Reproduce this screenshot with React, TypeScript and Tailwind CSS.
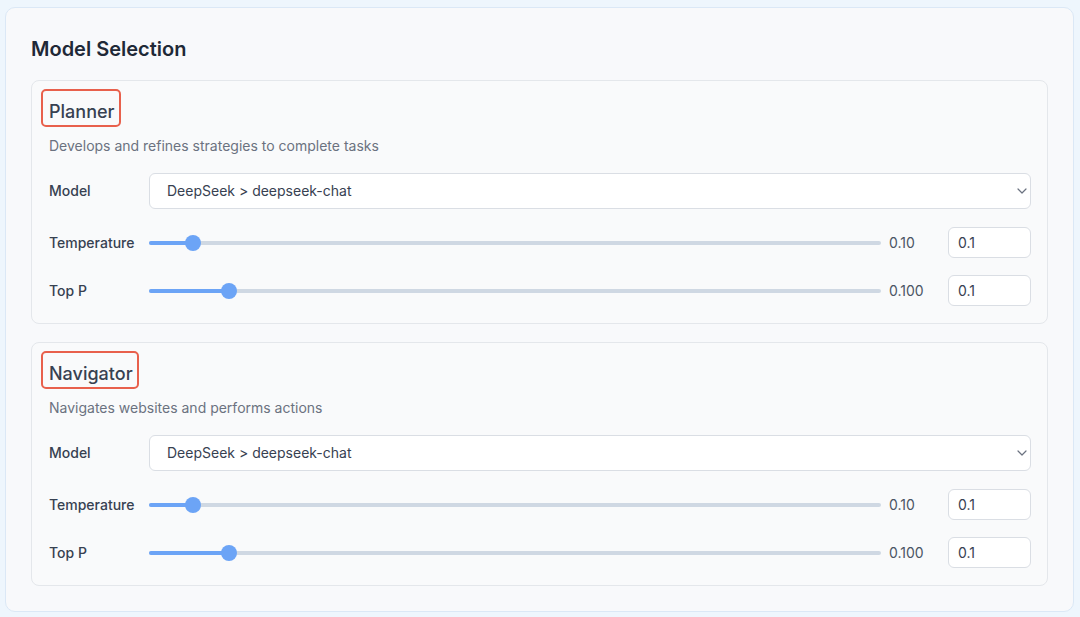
import { useState } from "react";

type Agent = {
  name: string;
  description: string;
};

const agents: Agent[] = [
  { name: "Planner", description: "Develops and refines strategies to complete tasks" },
  { name: "Navigator", description: "Navigates websites and performs actions" },
];

function Slider({ value, max }: { value: number; max: number }) {
  const pct = value / max;
  const pos = `calc(8px + ${pct} * (100% - 16px))`;
  return (
    <div className="relative flex h-4 flex-1 items-center">
      <div className="h-1 w-full rounded-full bg-[#cfd8e3]" />
      <div className="absolute left-0 h-1 rounded-full bg-[#6ca4f6]" style={{ width: pos }} />
      <div
        className="absolute top-0 size-4 -translate-x-1/2 rounded-full bg-[#6ca4f6]"
        style={{ left: pos }}
      />
    </div>
  );
}

function ParamRow({ label, value, max, display }: { label: string; value: number; max: number; display: string }) {
  const [text, setText] = useState(String(value));
  return (
    <div className="flex h-[31px] items-center">
      <label className="w-[100px] shrink-0 text-sm font-medium text-[#374151]">{label}</label>
      <Slider value={value} max={max} />
      <span className="ml-2 w-[51px] text-sm text-[#4b5563]">{display}</span>
      <input
        value={text}
        onChange={(e) => setText(e.target.value)}
        className="ml-2 h-[31px] w-[83px] rounded-md border border-[#dadee4] bg-white pl-[9px] text-sm text-[#374151] outline-none"
      />
    </div>
  );
}

function AgentCard({ agent }: { agent: Agent }) {
  return (
    <div className="rounded-lg border border-[#e4e7eb] bg-[#f9fafb] pt-[17px] pb-[17px] pl-[17px] pr-4">
      <h3 className="text-lg leading-7 font-medium text-[#374151]">
        <span className="relative inline-block">
          {agent.name}
          {/* highlight annotation */}
          <span className="absolute -top-[9px] -bottom-[1px] -left-[8px] -right-[6px] rounded-[5px] border-2 border-[#e8604c]" />
        </span>
      </h3>
      <p className="mt-[10px] text-sm leading-5 text-[#6b7280]">{agent.description}</p>

      <div className="mt-[17px] flex h-9 items-center">
        <label className="w-[100px] shrink-0 text-sm font-medium text-[#374151]">Model</label>
        <div className="relative flex-1">
          <select className="h-9 w-full appearance-none rounded-md border border-[#dadee4] bg-white pl-[17px] text-sm text-[#374151] outline-none">
            <option>DeepSeek &gt; deepseek-chat</option>
          </select>
          <svg
            className="pointer-events-none absolute right-[4px] top-1/2 -translate-y-1/2"
            width="10"
            height="6"
            viewBox="0 0 10 6"
            fill="none"
          >
            <polyline points="1,1 5,5 9,1" stroke="#6b7280" strokeWidth="1.2" strokeLinecap="round" strokeLinejoin="round" />
          </svg>
        </div>
      </div>

      <div className="mt-[18px] flex flex-col gap-[17px]">
        <ParamRow label="Temperature" value={0.1} max={2} display="0.10" />
        <ParamRow label="Top P" value={0.1} max={1} display="0.100" />
      </div>
    </div>
  );
}

export default function App() {
  return (
    <div className="h-screen overflow-hidden bg-[#eef6fd] pt-[7px] pl-[5px] pr-[6px] font-['Inter',sans-serif]">
      <div className="rounded-[10px] border border-[#dbe8f6] bg-[#f8f9fb] px-[25px] pt-[27px] pb-[25px]">
        <h2 className="text-xl leading-7 font-semibold text-[#1f2937]">Model Selection</h2>
        <div className="mt-[17px] flex flex-col gap-[18px]">
          {agents.map((a) => (
            <AgentCard key={a.name} agent={a} />
          ))}
        </div>
      </div>
    </div>
  );
}
